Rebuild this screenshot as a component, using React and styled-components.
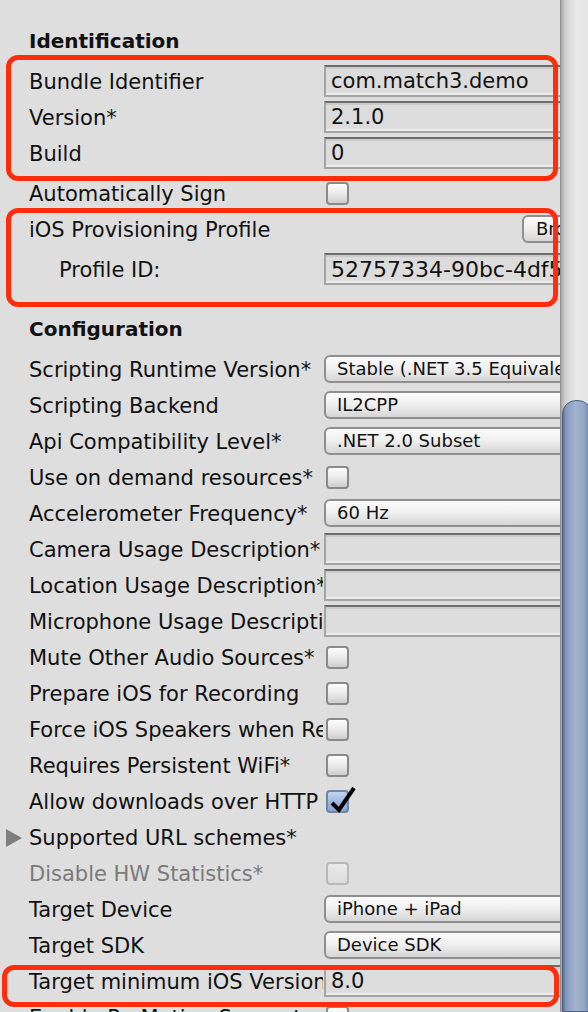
import React from 'react';
import styled, { createGlobalStyle } from 'styled-components';

const GlobalStyle = createGlobalStyle`
  html, body {
    margin: 0;
    padding: 0;
    background: #dedede;
  }
  body {
    font-family: "DejaVu Sans", "Liberation Sans", sans-serif;
    color: #111;
  }
`;

const Window = styled.div`
  position: relative;
  display: flex;
  width: 588px;
  height: 1012px;
  overflow: hidden;
  background: #dedede;
`;

const Inspector = styled.div`
  flex: none;
  width: 560px;
  padding-top: 23px;
  overflow: hidden;
`;

const SectionTitle = styled.div`
  height: 36px;
  line-height: 36px;
  padding-left: 29px;
  margin-top: ${(p) => p.$gap || 0}px;
  font-size: 20px;
  font-weight: bold;
`;

const Row = styled.div`
  display: grid;
  grid-template-columns: 323px 320px;
  column-gap: 1px;
  align-items: center;
  height: 36px;
  margin-top: ${(p) => p.$gap || 0}px;
`;

const Label = styled.div`
  display: flex;
  align-items: center;
  height: 36px;
  padding-top: 2px;
  box-sizing: border-box;
  padding-left: ${(p) => p.$indent || 29}px;
  overflow: hidden;
  white-space: nowrap;
  font-size: 21px;
  line-height: 34px;
  color: ${(p) => (p.$disabled ? '#7a7a7a' : '#111')};
`;

const Triangle = styled.span`
  flex: none;
  width: 0;
  height: 0;
  margin-right: 7px;
  border-top: 9px solid transparent;
  border-bottom: 9px solid transparent;
  border-left: 16px solid #7e7e7e;
`;

const Control = styled.div`
  display: flex;
  align-items: center;
`;

const TextField = styled.div`
  box-sizing: border-box;
  width: 100%;
  height: 32px;
  padding-left: 5px;
  border: 2px solid #a4a4a4;
  border-top-color: #6c6c6c;
  background: #dcdcdc;
  box-shadow: inset 0 2px 0 #cbcbcb, inset 0 -2px 0 #ececec;
  font-size: ${(p) => p.$size || 21}px;
  line-height: 29px;
  white-space: nowrap;
  overflow: hidden;
`;

const Popup = styled.div`
  box-sizing: border-box;
  width: 100%;
  height: 28px;
  padding-left: 11px;
  border: 2px solid #8f8f8f;
  border-radius: 6px;
  background: linear-gradient(#fbfbfb, #f0f0f0 45%, #d6d6d6);
  font-size: 18px;
  line-height: 24px;
  white-space: nowrap;
  overflow: hidden;
`;

const Checkbox = styled.div`
  position: relative;
  box-sizing: border-box;
  width: 23px;
  height: 23px;
  margin-left: 2px;
  border-radius: 4px;
  border: 2px solid ${(p) => (p.$checked ? '#6f84a6' : p.$disabled ? '#b9b9b9' : '#8a8a8a')};
  background: ${(p) =>
    p.$checked
      ? 'linear-gradient(#c3d4ef, #9db6de 55%, #8ba7d6)'
      : p.$disabled
      ? 'linear-gradient(#eaeaea, #dcdcdc)'
      : 'linear-gradient(#fdfdfd, #ececec 45%, #cfcfcf)'};
`;

const Check = styled.svg`
  position: absolute;
  left: -2px;
  top: -8px;
  width: 32px;
  height: 32px;
  overflow: visible;
`;

const Button = styled.div`
  box-sizing: border-box;
  height: 28px;
  margin-left: 198px;
  padding: 0 12px;
  border: 2px solid #8f8f8f;
  border-radius: 6px;
  background: linear-gradient(#fbfbfb, #f0f0f0 45%, #d6d6d6);
  font-size: 18px;
  line-height: 24px;
  white-space: nowrap;
`;

const Scrollbar = styled.div`
  flex: none;
  display: flex;
  flex-direction: column;
  width: 28px;
  padding-top: 400px;
  background: linear-gradient(
    to right,
    #8a8a8a 0,
    #9a9a9a 1px,
    #b5b5b5 2px,
    #d2d2d2 6px,
    #e8e8e8 16px,
    #e6e6e6 100%
  );
`;

const Thumb = styled.div`
  flex: 1;
  box-sizing: border-box;
  width: 30px;
  margin-left: 2px;
  border: 1px solid #4c5f82;
  border-radius: 14px 14px 0 0;
  background: linear-gradient(
    to right,
    #5d7299 0,
    #8599bd 3px,
    #a3b3cf 45%,
    #93a6c6 75%,
    #6e82a6 100%
  );
`;

const Annotation = styled.div`
  position: absolute;
  top: ${(p) => p.$top}px;
  left: ${(p) => p.$left}px;
  width: ${(p) => p.$w}px;
  height: ${(p) => p.$h}px;
  box-sizing: border-box;
  border: 5px solid #fe2d0c;
  border-radius: 12px;
  pointer-events: none;
`;

function CheckMark() {
  return (
    <Check viewBox="0 0 32 32">
      <path d="M6 19 L13 26 L28 4" fill="none" stroke="#000" strokeWidth="4" strokeLinejoin="miter" />
    </Check>
  );
}

function Field({ label, value, gap, indent, size }) {
  return (
    <Row $gap={gap}>
      <Label $indent={indent}>{label}</Label>
      <Control>
        <TextField $size={size}>{value}</TextField>
      </Control>
    </Row>
  );
}

function Select({ label, value, gap }) {
  return (
    <Row $gap={gap}>
      <Label>{label}</Label>
      <Control>
        <Popup>{value}</Popup>
      </Control>
    </Row>
  );
}

function Toggle({ label, checked, disabled, gap }) {
  return (
    <Row $gap={gap}>
      <Label $disabled={disabled}>{label}</Label>
      <Control>
        <Checkbox $checked={checked} $disabled={disabled}>
          {checked && <CheckMark />}
        </Checkbox>
      </Control>
    </Row>
  );
}

export default function App() {
  return (
    <>
      <GlobalStyle />
      <Window>
        <Inspector>
          <SectionTitle>Identification</SectionTitle>
          <Field label="Bundle Identifier" value="com.match3.demo" gap={4} />
          <Field label="Version*" value="2.1.0" />
          <Field label="Build" value="0" />
          <Toggle label="Automatically Sign" gap={4} />
          <Row>
            <Label>iOS Provisioning Profile</Label>
            <Control>
              <Button>Browse</Button>
            </Control>
          </Row>
          <Field label="Profile ID:" value="52757334-90bc-4df5-a1c2-8e3f" indent={59} size={22} gap={4} />

          <SectionTitle $gap={24}>Configuration</SectionTitle>
          <Select label="Scripting Runtime Version*" value="Stable (.NET 3.5 Equivalent)" gap={4} />
          <Select label="Scripting Backend" value="IL2CPP" />
          <Select label="Api Compatibility Level*" value=".NET 2.0 Subset" />
          <Toggle label="Use on demand resources*" />
          <Select label="Accelerometer Frequency*" value="60 Hz" />
          <Field label="Camera Usage Description*" value="" />
          <Field label="Location Usage Description*" value="" />
          <Field label="Microphone Usage Description*" value="" />
          <Toggle label="Mute Other Audio Sources*" />
          <Toggle label="Prepare iOS for Recording" />
          <Toggle label="Force iOS Speakers when Recording" />
          <Toggle label="Requires Persistent WiFi*" />
          <Toggle label="Allow downloads over HTTP (nonsecure)*" checked />
          <Row>
            <Label $indent={6}>
              <Triangle />
              Supported URL schemes*
            </Label>
          </Row>
          <Toggle label="Disable HW Statistics*" disabled />
          <Select label="Target Device" value="iPhone + iPad" />
          <Select label="Target SDK" value="Device SDK" />
          <Field label="Target minimum iOS Version" value="8.0" />
          <Toggle label="Enable ProMotion Support" />
        </Inspector>
        <Scrollbar>
          <Thumb />
        </Scrollbar>

        <Annotation $top={55} $left={6} $w={552} $h={126} />
        <Annotation $top={208} $left={6} $w={552} $h={99} />
        <Annotation $top={965} $left={2} $w={557} $h={42} />
      </Window>
    </>
  );
}
